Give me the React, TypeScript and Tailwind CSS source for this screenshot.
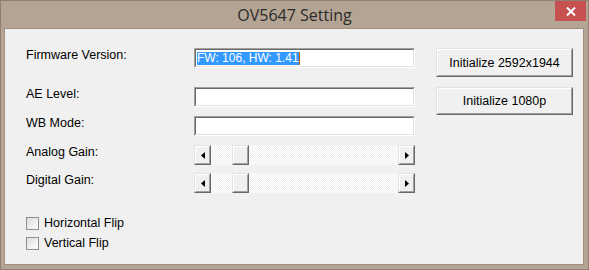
import React from "react";

const ui = "font-['Liberation_Sans',Arial,sans-serif]";

interface BoxProps {
  className?: string;
  children?: React.ReactNode;
}

// classic raised 3D box (buttons, scroll arrows, thumb)
const Raised: React.FC<BoxProps> = ({ className = "", children }) => (
  <div
    className={`border border-t-[#e3e3e3] border-l-[#e3e3e3] border-r-[#696969] border-b-[#696969] ${className}`}
  >
    <div className="w-full h-full flex items-center justify-center border border-t-white border-l-white border-r-[#a0a0a0] border-b-[#a0a0a0] bg-[#f0f0f0]">
      {children}
    </div>
  </div>
);

// classic sunken edit box
const Sunken: React.FC<BoxProps> = ({ className = "", children }) => (
  <div
    className={`border border-t-[#a0a0a0] border-l-[#a0a0a0] border-r-white border-b-white ${className}`}
  >
    <div className="w-full h-full flex items-center border border-t-[#696969] border-l-[#696969] border-r-[#e3e3e3] border-b-[#e3e3e3] bg-white">
      {children}
    </div>
  </div>
);

const Arrow: React.FC<{ dir: "left" | "right" }> = ({ dir }) => (
  <svg width="4" height="7" viewBox="0 0 4 7">
    {dir === "left" ? (
      <polygon points="4,0 4,7 0,3.5" fill="#000" />
    ) : (
      <polygon points="0,0 0,7 4,3.5" fill="#000" />
    )}
  </svg>
);

const ScrollBar: React.FC = () => (
  <div className="flex w-[221px] h-[20px]">
    <Raised className="w-[17px] h-full">
      <Arrow dir="left" />
    </Raised>
    <div className="flex-1 h-full bg-[image:repeating-conic-gradient(#efefef_0_25%,#ffffff_0_50%)] bg-[length:2px_2px] pl-[21px]">
      <Raised className="w-[17px] h-full" />
    </div>
    <Raised className="w-[17px] h-full">
      <Arrow dir="right" />
    </Raised>
  </div>
);

const Label: React.FC<{ text: string }> = ({ text }) => (
  <div className="w-[168px] text-[12.5px] leading-[14px] text-black">{text}</div>
);

const CheckRow: React.FC<{ text: string; className?: string }> = ({ text, className = "" }) => (
  <div className={`flex items-center h-[14px] ${className}`}>
    <div className="w-[13px] h-[13px] border border-[#8f8f8f] bg-gradient-to-br from-[#dcdcdc] to-white" />
    <span className="ml-[5px] text-[12.5px] leading-[14px] text-black">{text}</span>
  </div>
);

export default function App() {
  return (
    <div className={`w-[589px] h-[270px] flex flex-col bg-[#b4a493] border border-[#8e7f70] ${ui}`}>
      {/* title bar */}
      <div className="relative h-[27px] pt-[3px] text-center">
        <span className="font-['Open_Sans',sans-serif] text-[16px] leading-[22px] text-[#2b2b2b]">
          OV5647 Setting
        </span>
        <div className="absolute top-0 right-[2px] w-[31px] h-[20px] bg-[#c75050] flex items-center justify-center">
          <svg width="10" height="9" viewBox="0 0 10 9">
            <path d="M1 0.5 L9 8.5 M9 0.5 L1 8.5" stroke="#fff" strokeWidth="2" />
          </svg>
        </div>
      </div>

      {/* client area */}
      <div className="flex-1 ml-[3px] mr-[4px] mb-[4px] bg-[#f0f0f0] border border-[#a08f7f] flex pl-[21px] pt-[19px]">
        <div className="flex flex-col">
          <div className="flex items-start">
            <Label text="Firmware Version:" />
            <Sunken className="w-[221px] h-[20px]">
              <span className="ml-px flex items-center h-[13px] bg-[#3399ff] text-white text-[12px] leading-[13px] border-r border-[#cc6600]">
                FW: 106, HW: 1.41
              </span>
            </Sunken>
          </div>
          <div className="flex items-start mt-[19px]">
            <Label text="AE Level:" />
            <Sunken className="w-[221px] h-[20px]" />
          </div>
          <div className="flex items-start mt-[9px]">
            <Label text="WB Mode:" />
            <Sunken className="w-[221px] h-[20px]" />
          </div>
          <div className="flex items-start mt-[9px]">
            <Label text="Analog Gain:" />
            <ScrollBar />
          </div>
          <div className="flex items-start mt-[8px]">
            <Label text="Digital Gain:" />
            <ScrollBar />
          </div>
          <CheckRow text="Horizontal Flip" className="mt-[23px]" />
          <CheckRow text="Vertical Flip" className="mt-[6px]" />
        </div>

        <div className="flex flex-col ml-[21px]">
          <Raised className="w-[137px] h-[29px]">
            <span className="text-[12.5px] leading-[14px] text-black">Initialize 2592x1944</span>
          </Raised>
          <Raised className="w-[137px] h-[28px] mt-[10px]">
            <span className="text-[12.5px] leading-[14px] text-black">Initialize 1080p</span>
          </Raised>
        </div>
      </div>
    </div>
  );
}
